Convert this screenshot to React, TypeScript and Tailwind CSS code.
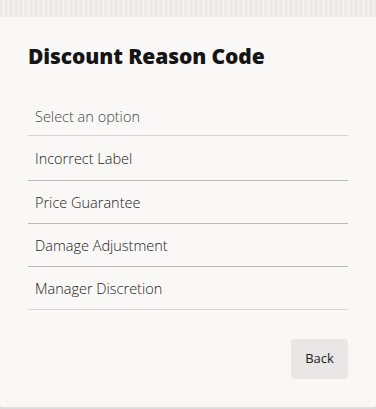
import React from "react";

const items = [
  { label: "Incorrect Label", cls: "h-[45px] border-[#b9b9b9]" },
  { label: "Price Guarantee", cls: "h-[43px] border-[#b9b9b9]" },
  { label: "Damage Adjustment", cls: "h-[43px] border-[#b9b9b9]" },
  { label: "Manager Discretion", cls: "h-[43px] border-[#d6d6d6]" },
];

export default function App() {
  return (
    <div className="w-[376px] h-[409px] overflow-hidden bg-[#dcdcdc] flex flex-col">
      <div className="h-[17px] shrink-0 bg-[repeating-linear-gradient(90deg,#e2e1df_0px,#f6f5f3_1px,#dedddb_2px,#fbfaf8_3px,#e8e7e5_5px)]" />
      <div
        className="h-[391px] shrink-0 bg-[#f9f8f6] border-b border-[#e0dfdd] rounded-b-[3px] px-[28px] flex flex-col"
        style={{ fontFamily: '"Open Sans", "Noto Sans", sans-serif' }}
      >
        <h1
          className="mt-[25px] text-[21px] leading-[28px] font-extrabold text-[#151515] tracking-[-0.1px]"
          style={{ fontFamily: '"Open Sans", "Noto Sans", sans-serif' }}
        >
          Discount Reason Code
        </h1>
        <div className="mt-[22px] flex flex-col">
          <div className="pt-[15px] pb-[8px] pl-[7px] border-b border-[#d4d4d4] text-[14.5px] leading-[20px] font-light text-[#444444]">
            Select an option
          </div>
          {items.map((it) => (
            <div
              key={it.label}
              className={`flex items-center pt-[1px] pl-[7px] border-b text-[14.5px] leading-[20px] font-light text-[#222222] ${it.cls}`}
            >
              {it.label}
            </div>
          ))}
        </div>
        <div className="flex justify-end mt-[29px]">
          <button className="w-[57px] h-[40px] rounded-[4px] bg-[#e8e7e5] text-[13px] text-[#222222]">
            Back
          </button>
        </div>
      </div>
    </div>
  );
}
